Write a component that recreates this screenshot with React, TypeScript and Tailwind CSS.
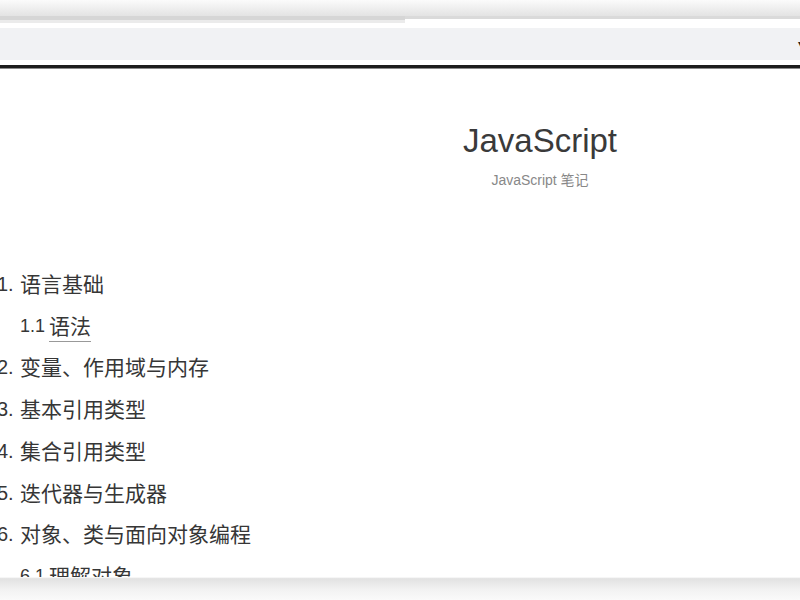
const TOC = [
  { num: '1.', title: '语言基础', level: 0 },
  { num: '1.1', title: '语法', level: 1, active: true },
  { num: '2.', title: '变量、作用域与内存', level: 0 },
  { num: '3.', title: '基本引用类型', level: 0 },
  { num: '4.', title: '集合引用类型', level: 0 },
  { num: '5.', title: '迭代器与生成器', level: 0 },
  { num: '6.', title: '对象、类与面向对象编程', level: 0 },
  { num: '6.1', title: '理解对象', level: 1 },
]

const FONT = { fontFamily: '"Liberation Sans", "Noto Sans CJK SC", sans-serif' }

export default function App() {
  return (
    <div className="relative w-[800px] h-[600px] overflow-hidden bg-white text-[#333]" style={FONT}>
      {/* window chrome */}
      <div className="h-[16px] bg-gradient-to-b from-[#fbfbfb] to-[#e3e3e3]" />
      <div className="flex h-[7px]">
        <div className="w-[405px] flex flex-col">
          <div className="h-[4px] bg-[#d6d6d6]" />
          <div className="h-[3px] bg-[#ebebeb]" />
        </div>
        <div className="flex-1 flex flex-col">
          <div className="h-[3px] bg-[#dadada]" />
          <div className="h-[4px] bg-white" />
        </div>
      </div>
      <div className="h-[5px] bg-white" />
      <div className="relative h-[32px] bg-[#f1f2f4]">
        <span className="absolute right-[-3px] top-[11px] text-[10px] leading-none text-[#222]">▾</span>
      </div>
      <div className="h-[5px] bg-white" />
      <div className="h-[4px] bg-[#1c1c1c] border-b border-[#8a8a8a]" />

      {/* page */}
      <div className="pl-[280px] pt-[52px] flex flex-col items-center">
        <h1 className="text-[33px] leading-[40px] text-[#3a3a3a] font-normal">JavaScript</h1>
        <p className="mt-[10px] text-[14px] leading-[18px] text-[#888]">JavaScript 笔记</p>
      </div>

      <ul className="mt-[75px] text-[#363636]">
        {TOC.map((item) => (
          <li key={item.num} className="flex text-[21px] leading-[41.7px] whitespace-nowrap">
            {item.level === 0 ? (
              <span className="shrink-0 w-[23px] ml-[-3px] text-[20px]">{item.num}</span>
            ) : (
              <span className="shrink-0 w-[29px] ml-[20px] text-[18px]">{item.num}</span>
            )}
            <span className={item.active ? 'self-center leading-[28px] border-b border-[#999] mt-[2px]' : ''}>
              {item.title}
            </span>
          </li>
        ))}
      </ul>

      {/* bottom shadow of the photographed window */}
      <div className="absolute left-0 right-0 bottom-0 h-[21px] bg-gradient-to-b from-[#e2e2e2] via-[#f2f2f2] to-[#fafafa]" />
      <div className="absolute left-0 right-0 bottom-[21px] h-[2px] bg-gradient-to-b from-white to-[#dcdcdc]" />
    </div>
  )
}
